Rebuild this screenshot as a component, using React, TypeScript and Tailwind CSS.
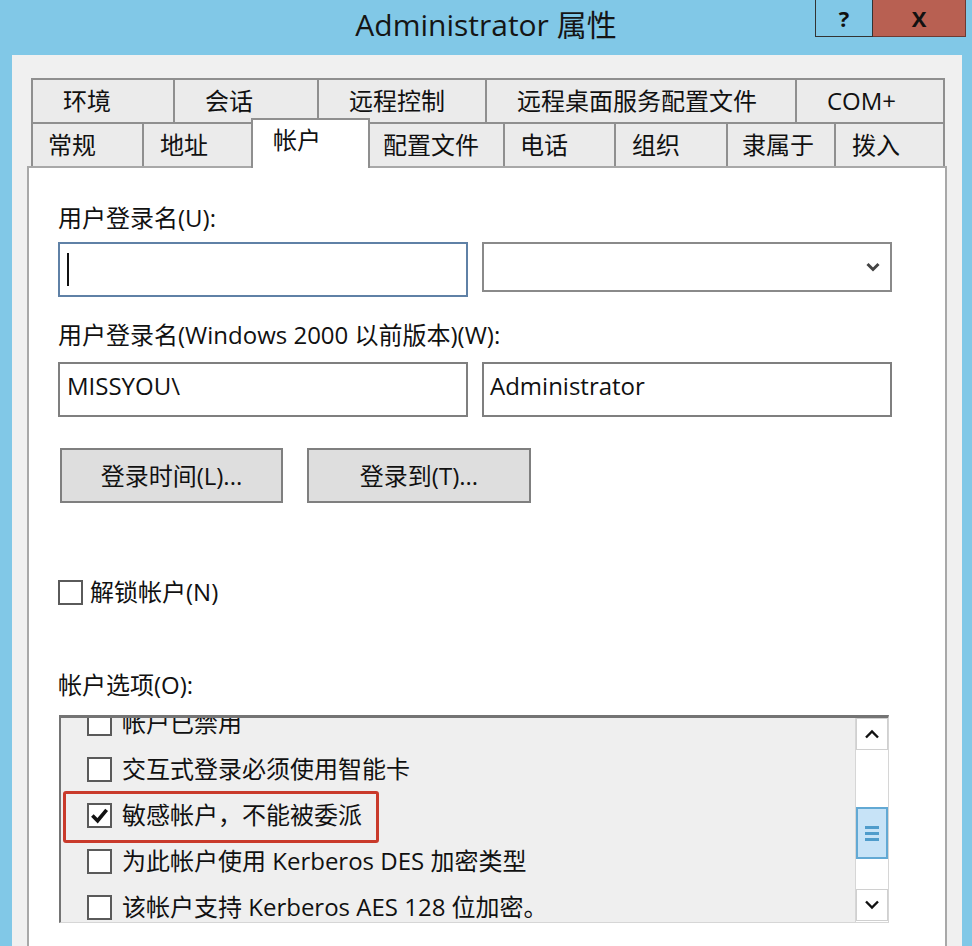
import React from 'react';

const topTabs = [
  { label: '环境', w: 'w-[142px]' },
  { label: '会话', w: 'w-[144px]' },
  { label: '远程控制', w: 'w-[168px]' },
  { label: '远程桌面服务配置文件', w: 'w-[310px]' },
  { label: 'COM+', w: 'w-[150px]', last: true },
];

const options = [
  { label: '帐户已禁用', checked: false },
  { label: '交互式登录必须使用智能卡', checked: false },
  { label: '敏感帐户，不能被委派', checked: true, marked: true },
  { label: '为此帐户使用 Kerberos DES 加密类型', checked: false },
  { label: '该帐户支持 Kerberos AES 128 位加密。', checked: false },
];

function CheckBox({ checked }: { checked?: boolean }) {
  return (
    <div className="w-[25px] h-[25px] shrink-0 border-2 border-[#5a5a5a] bg-white flex items-center justify-center">
      {checked && (
        <svg width="19" height="19" viewBox="0 0 20 20">
          <path d="M2.5 10 L8 15.5 L17.5 4" fill="none" stroke="#111" strokeWidth="3.8" />
        </svg>
      )}
    </div>
  );
}

function Chevron({ up }: { up?: boolean }) {
  return (
    <svg width="16" height="10" viewBox="0 0 16 10">
      <path d={up ? 'M2 8.5 L8 2.5 L14 8.5' : 'M2 1.5 L8 7.5 L14 1.5'} fill="none" stroke="#111" strokeWidth="2.4" />
    </svg>
  );
}

export default function App() {
  return (
    <div className="w-[972px] h-[946px] bg-[#81c8e7] flex flex-col overflow-hidden text-[#111] font-['Open_Sans','Noto_Sans_CJK_SC',sans-serif]">
      {/* Title bar */}
      <header className="h-[55px] shrink-0 relative flex items-center justify-center pb-[5px]">
        <h1 className="text-[30px] leading-none text-[#151515]">Administrator 属性</h1>
        <div className="absolute top-0 right-[6px] flex h-[37px]">
          <div className="w-[58px] border border-t-0 border-[#333] flex items-center justify-center text-[22px] font-bold">?</div>
          <div className="w-[93px] bg-[#b86052] border-b border-r border-[#6e3a32] flex items-center justify-center text-[22px] font-bold">X</div>
        </div>
      </header>

      {/* Dialog body */}
      <div className="flex-1 ml-[12px] mr-[10px] bg-[#f0f0f0] pt-[23px] pl-[15px] pr-[15px] flex flex-col min-h-0">
        <div className="pl-[4px] text-[24px]">
          <div className="flex h-[44px]">
            {topTabs.map(t => (
              <div
                key={t.label}
                className={`${t.w} h-full bg-[#ebebeb] border-l-2 border-t-2 border-[#8f8f8f] ${t.last ? 'border-r-2' : ''} pl-[30px] flex items-center`}
              >
                {t.label}
              </div>
            ))}
          </div>
          <div className="flex h-[44px] items-end">
            <div className="w-[111px] h-full bg-[#ebebeb] border-l-2 border-t-2 border-[#8f8f8f] pl-[15px] flex items-center">常规</div>
            <div className="w-[109px] h-full bg-[#ebebeb] border-l-2 border-t-2 border-[#8f8f8f] pl-[16px] flex items-center">地址</div>
            <div className="w-[119px] h-[50px] -mb-[2px] relative z-10 bg-white border-l-2 border-t-2 border-r-2 border-[#8f8f8f] pl-[20px] pt-[2px] flex items-start">帐户</div>
            <div className="w-[133px] h-full bg-[#ebebeb] border-t-2 border-[#8f8f8f] pl-[13px] flex items-center">配置文件</div>
            <div className="w-[111px] h-full bg-[#ebebeb] border-l-2 border-t-2 border-[#8f8f8f] pl-[15px] flex items-center">电话</div>
            <div className="w-[112px] h-full bg-[#ebebeb] border-l-2 border-t-2 border-[#8f8f8f] pl-[16px] flex items-center">组织</div>
            <div className="w-[108px] h-full bg-[#ebebeb] border-l-2 border-t-2 border-[#8f8f8f] pl-[14px] flex items-center">隶属于</div>
            <div className="w-[111px] h-full bg-[#ebebeb] border-l-2 border-t-2 border-r-2 border-[#8f8f8f] pl-[16px] flex items-center">拨入</div>
          </div>
        </div>

        {/* Tab panel */}
        <div className="flex-1 bg-white border-2 border-b-0 border-[#a8a8a8] pl-[29px] text-[24px] leading-[30px] min-h-0 overflow-hidden">
          <div className="mt-[35px]">用户登录名(U):</div>
          <div className="mt-[9px] flex items-start gap-[14px]">
            <div className="w-[410px] h-[55px] border-2 border-[#5f81a6] bg-white pl-[7px] flex items-center">
              <div className="w-[2px] h-[33px] bg-[#111]" />
            </div>
            <div className="w-[410px] h-[50px] border-2 border-[#8a8a8a] bg-white flex items-center justify-end pr-[10px]">
              <svg width="14" height="10" viewBox="0 0 14 10">
                <path d="M1.5 2 L7 7.5 L12.5 2" fill="none" stroke="#444" strokeWidth="3" />
              </svg>
            </div>
          </div>

          <div className="mt-[23px]">用户登录名(Windows 2000 以前版本)(W):</div>
          <div className="mt-[12px] flex items-start gap-[14px]">
            <div className="w-[410px] h-[55px] border-2 border-[#7f7f7f] bg-white pl-[7px] pb-[8px] flex items-center">MISSYOU\</div>
            <div className="w-[410px] h-[55px] border-2 border-[#7f7f7f] bg-white pl-[6px] pb-[8px] flex items-center">Administrator</div>
          </div>

          <div className="mt-[31px] flex gap-[24px] pl-[2px]">
            <div className="w-[223px] h-[55px] bg-[#dedede] border-2 border-[#7f7f7f] flex items-center justify-center">登录时间(L)...</div>
            <div className="w-[224px] h-[55px] bg-[#dedede] border-2 border-[#7f7f7f] flex items-center justify-center">登录到(T)...</div>
          </div>

          <div className="mt-[74px] flex items-center gap-[7px]">
            <CheckBox />
            <span>解锁帐户(N)</span>
          </div>

          <div className="mt-[63px]">帐户选项(O):</div>

          {/* Account options list */}
          <div className="mt-[15px] ml-[1px] w-[830px] h-[208px] bg-[#efefef] border-t-[3px] border-l-2 border-[#747474] border-r border-r-[#d6d6d6] border-b border-b-[#d6d6d6] flex">
            <div className="flex-1 overflow-hidden">
              <div className="-mt-[18px]">
                {options.map(o => (
                  <div key={o.label} className="relative h-[46px] pl-[26px] flex items-center gap-[10px]">
                    <CheckBox checked={o.checked} />
                    <span>{o.label}</span>
                    {o.marked && (
                      <div className="absolute left-[2px] top-[-1px] w-[316px] h-[52px] border-[3px] border-[#c93a2b] rounded-[3px]" />
                    )}
                  </div>
                ))}
              </div>
            </div>
            <div className="w-[33px] shrink-0 bg-white border-l border-[#d6d6d6] flex flex-col">
              <div className="h-[32px] border border-[#d0d0d0] flex items-center justify-center">
                <Chevron up />
              </div>
              <div className="h-[57px]" />
              <div className="h-[52px] bg-[#c7e3f7] border-2 border-[#62a9d4] flex flex-col items-center justify-center gap-[3px]">
                <div className="w-[14px] h-[3px] bg-[#4f9ccb]" />
                <div className="w-[14px] h-[3px] bg-[#4f9ccb]" />
                <div className="w-[14px] h-[3px] bg-[#4f9ccb]" />
              </div>
              <div className="h-[30px]" />
              <div className="h-[32px] border border-[#d0d0d0] flex items-center justify-center">
                <Chevron />
              </div>
            </div>
          </div>
        </div>
      </div>
    </div>
  );
}
